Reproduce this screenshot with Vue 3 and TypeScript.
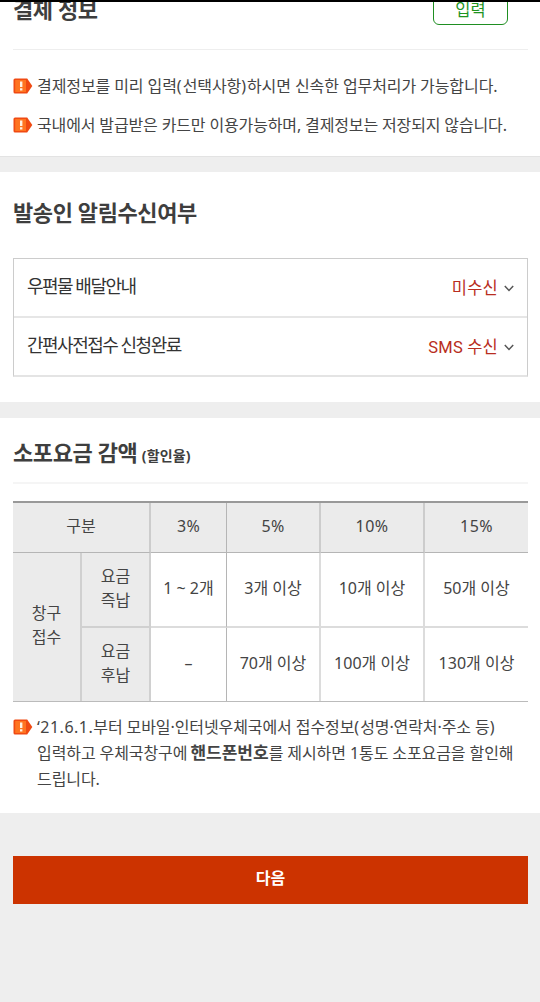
<script setup lang="ts">
interface AlertRow {
  label: string
  value: string
}

const alertRows: AlertRow[] = [
  { label: '우편물 배달안내', value: '미수신' },
  { label: '간편사전접수 신청완료', value: 'SMS 수신' },
]

const rates: string[] = ['3%', '5%', '10%', '15%']
const prepaid: string[] = ['1 ~ 2개', '3개 이상', '10개 이상', '50개 이상']
const postpaid: string[] = ['–', '70개 이상', '100개 이상', '130개 이상']
</script>

<template>
  <main class="page">
    <section class="panel payment">
      <header class="payment-head">
        <h2 class="title">결제 정보</h2>
        <button class="enter" type="button">입력</button>
      </header>
      <ul class="notes">
        <li class="note">
          <svg class="mark" viewBox="0 0 20 16">
            <path d="M2 .5H14.2L19.3 8L14.2 15.5H2Q.5 15.5 .5 14V2Q.5 .5 2 .5Z" fill="#f04a12" />
            <path d="M2.2 2H13V14H2.2Z" fill="#ff7420" />
            <path d="M7 3.5H9.4V9H7ZM7 10.2H9.4V12.4H7Z" fill="#fff3e4" />
          </svg>
          <span>결제정보를 미리 입력<i class="paren">(</i>선택사항<i class="paren">)</i>하시면 신속한 업무처리가 가능합니다.</span>
        </li>
        <li class="note">
          <svg class="mark" viewBox="0 0 20 16">
            <path d="M2 .5H14.2L19.3 8L14.2 15.5H2Q.5 15.5 .5 14V2Q.5 .5 2 .5Z" fill="#f04a12" />
            <path d="M2.2 2H13V14H2.2Z" fill="#ff7420" />
            <path d="M7 3.5H9.4V9H7ZM7 10.2H9.4V12.4H7Z" fill="#fff3e4" />
          </svg>
          <span>국내에서 발급받은 카드만 이용가능하며, 결제정보는 저장되지 않습니다.</span>
        </li>
      </ul>
    </section>

    <section class="panel alerts">
      <h2 class="title">발송인 알림수신여부</h2>
      <div class="alert-list">
        <div v-for="row in alertRows" :key="row.label" class="alert-row">
          <span class="alert-label">{{ row.label }}</span>
          <span class="alert-value">
            {{ row.value }}
            <svg class="chevron" viewBox="0 0 10 7">
              <path d="M.8 1L5 5.4L9.2 1" fill="none" stroke="#555" stroke-width="1.5" />
            </svg>
          </span>
        </div>
      </div>
    </section>

    <section class="panel discount">
      <h2 class="title discount-title">소포요금 감액 <small>(할인율)</small></h2>
      <div class="table">
        <div class="cell head wide">구분</div>
        <div v-for="rate in rates" :key="rate" class="cell head rate">{{ rate }}</div>
        <div class="cell side tall">창구<br />접수</div>
        <div class="cell side split">요금<br />즉납</div>
        <div v-for="item in prepaid" :key="item" class="cell split">{{ item }}</div>
        <div class="cell side">요금<br />후납</div>
        <div v-for="item in postpaid" :key="item" class="cell">{{ item }}</div>
      </div>
      <div class="note long">
        <svg class="mark" viewBox="0 0 20 16">
          <path d="M2 .5H14.2L19.3 8L14.2 15.5H2Q.5 15.5 .5 14V2Q.5 .5 2 .5Z" fill="#f04a12" />
          <path d="M2.2 2H13V14H2.2Z" fill="#ff7420" />
          <path d="M7 3.5H9.4V9H7ZM7 10.2H9.4V12.4H7Z" fill="#fff3e4" />
        </svg>
        <p>
          <span class="date">‘21.6.1.</span>부터 모바일·인터넷우체국에서 접수정보<i class="paren">(</i>성명·연락처·주소 등)<br />
          입력하고 우체국창구에 <b>핸드폰번호</b>를 제시하면 1통도 소포요금을 할인해<br />
          드립니다.
        </p>
      </div>
    </section>

    <footer class="actions">
      <button class="next" type="button">다음</button>
    </footer>
  </main>
</template>

<style>
body {
  margin: 0;
  background: #eee;
}
</style>

<style scoped>
.page {
  box-sizing: border-box;
  width: 540px;
  height: 1002px;
  overflow: hidden;
  border-top: 2px solid #000;
  background: #eee;
  color: #444;
  font: 16px/26px "Noto Sans", "Noto Sans CJK KR", sans-serif;
  white-space: nowrap;
}
.panel {
  box-sizing: border-box;
  padding: 0 12px 0 13px;
  background: #fff;
}
.title {
  margin: 0;
  color: #3e3e3e;
  font-size: 22px;
  line-height: 32px;
  font-weight: 700;
  letter-spacing: -0.4px;
}
.payment {
  height: 155px;
  overflow: hidden;
  border-bottom: 1px solid #e3e3e3;
}
.payment-head {
  box-sizing: border-box;
  display: flex;
  justify-content: space-between;
  height: 48px;
  border-bottom: 1px solid #eee;
}
.payment-head .title {
  margin-top: -9px;
}
.enter {
  box-sizing: border-box;
  width: 75px;
  height: 36px;
  margin: -13px 20px 0 0;
  padding: 6px 0 0;
  border: 1px solid #1f8f22;
  border-radius: 6px;
  background: #fff;
  color: #1f941f;
  font: 16.5px/28px "Noto Sans", "Noto Sans CJK KR", sans-serif;
}
.notes {
  display: grid;
  gap: 13px;
  margin: 23px 0 0;
  padding: 0;
  list-style: none;
}
.note {
  display: flex;
  gap: 4px;
  letter-spacing: -0.09px;
}
.notes .note + .note {
  letter-spacing: -0.14px;
}
.paren {
  font-style: normal;
  letter-spacing: 1px;
}
.mark {
  flex: none;
  width: 20px;
  height: 16px;
  margin-top: 5px;
}
.alerts {
  height: 230px;
  margin-top: 15px;
  padding-top: 24px;
}
.alert-list {
  box-sizing: border-box;
  height: 119px;
  margin-top: 30px;
  border: 1px solid #ccc;
  border-bottom: 2px solid #e4e4e4;
}
.alert-row {
  box-sizing: border-box;
  display: flex;
  justify-content: space-between;
  height: 57px;
  padding: 14px 13px 0;
}
.alert-row + .alert-row {
  height: 59px;
  border-top: 2px solid #e6e6e6;
}
.alert-label {
  color: #333;
  font-size: 18px;
  letter-spacing: -1.5px;
}
.alert-value {
  display: flex;
  align-items: center;
  gap: 6px;
  height: 31px;
  color: #b82d20;
  font-family: Roboto, "Noto Sans CJK KR", sans-serif;
  font-size: 16.5px;
  letter-spacing: 0.2px;
}
.chevron {
  width: 10px;
  height: 7px;
}
.discount {
  height: 395px;
  margin-top: 16px;
  padding-top: 18px;
}
.discount-title {
  height: 46px;
  border-bottom: 2px solid #f5f5f5;
}
.discount-title small {
  margin-left: -1px;
  font-size: 14px;
  letter-spacing: 0.2px;
}
.table {
  display: grid;
  grid-template-columns: 69px 69px 76px 94px 104px 103px;
  grid-template-rows: 50px 75px 73px;
  margin-top: 17px;
  border-top: 2px solid #999;
  border-bottom: 1px solid #bbb;
}
.cell {
  display: flex;
  align-items: center;
  justify-content: center;
  box-sizing: border-box;
  padding-bottom: 4px;
  border: 0 solid #dcdcdc;
  border-right-width: 2px;
  line-height: 24px;
  text-align: center;
}
.head {
  border-color: #ccc;
  border-bottom: 1px solid #b5b5b5;
  background: #ebebeb;
}
.rate {
  letter-spacing: 0.4px;
}
.wide {
  grid-column: span 2;
}
.tall {
  grid-row: span 2;
}
.side {
  border-color: #d0d0d0;
  background: #ebebeb;
}
.split {
  border-bottom-width: 2px;
}
.cell:nth-child(2),
.cell:nth-child(8),
.cell:nth-child(13) {
  border-right: 1px solid #b5b5b5;
}
.cell:nth-child(5),
.cell:nth-child(11),
.cell:nth-child(16) {
  border-right: 0;
}
.long {
  margin-top: 12px;
}
.long p {
  margin: 0;
}
.date {
  letter-spacing: 0.5px;
}
.long b {
  margin-left: -1px;
  font-size: 17px;
  line-height: 20px;
  letter-spacing: 0;
}
.actions {
  padding: 43px 12px 0 13px;
}
.next {
  display: block;
  width: 100%;
  height: 48px;
  padding: 0 0 5px;
  border: 0;
  background: #c30;
  color: #fff;
  font: 700 16px/24px "Noto Sans", "Noto Sans CJK KR", sans-serif;
}
</style>
